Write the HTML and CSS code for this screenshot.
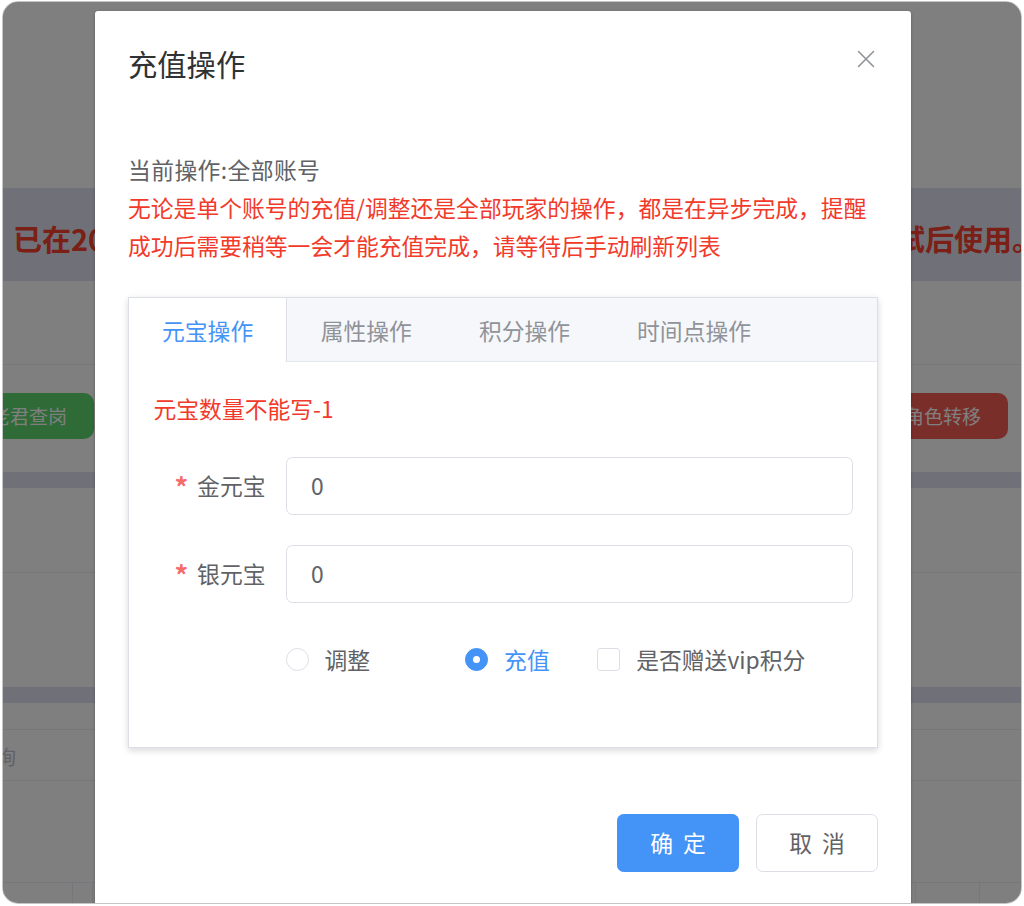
FILE: index.html
```html
<!DOCTYPE html>
<html lang="zh-CN">
<head>
<meta charset="utf-8">
<title>充值操作</title>
<link rel="stylesheet" href="styles.css">
</head>
<body>
<div class="frame">
  <div class="page">
    <div class="page-top"></div>
    <div class="notice">
      <span class="notice-left">已在2020年升级</span>
      <span class="notice-right">请刷新重试后使用。</span>
    </div>
    <div class="page-gap line"></div>
    <div class="action-row">
      <button class="bg-btn bg-btn-green">老君查岗</button>
      <button class="bg-btn bg-btn-red">角色转移</button>
    </div>
    <div class="band"></div>
    <div class="block-a line"></div>
    <div class="block-b"></div>
    <div class="band"></div>
    <div class="block-c line"></div>
    <div class="search-row line"><span class="search-text">查询</span></div>
    <div class="block-d line"></div>
    <div class="table-row">
      <div class="cell c1"></div>
      <div class="cell c2"></div>
      <div class="cell c3"></div>
      <div class="cell c4"></div>
      <div class="cell c5"></div>
    </div>
  </div>

  <div class="mask"></div>

  <div class="dialog">
    <div class="dialog-header">
      <span class="dialog-title">充值操作</span>
      <button class="dialog-close" aria-label="关闭">
        <svg width="26" height="26" viewBox="0 0 26 26"><path d="M5.5 5.5 L20.5 20.5 M20.5 5.5 L5.5 20.5" stroke="#909399" stroke-width="1.6" stroke-linecap="round" fill="none"/></svg>
      </button>
    </div>
    <div class="dialog-body">
      <div class="info">当前操作:全部账号</div>
      <div class="warn">无论是单个账号的充值/调整还是全部玩家的操作，都是在异步完成，提醒成功后需要稍等一会才能充值完成，请等待后手动刷新列表</div>

      <div class="tabs">
        <div class="tabs-header">
          <div class="tab tab-active">元宝操作</div>
          <div class="tab">属性操作</div>
          <div class="tab">积分操作</div>
          <div class="tab">时间点操作</div>
        </div>
        <div class="tab-pane">
          <div class="tip">元宝数量不能写-1</div>
          <div class="form-item">
            <label class="form-label"><span class="req">*</span>金元宝</label>
            <input class="input" type="text" value="0">
          </div>
          <div class="form-item">
            <label class="form-label"><span class="req">*</span>银元宝</label>
            <input class="input" type="text" value="0">
          </div>
          <div class="form-item">
            <div class="options">
              <span class="radio radio-adjust"><span class="radio-circle"></span><span class="radio-label">调整</span></span>
              <span class="radio radio-checked"><span class="radio-circle"></span><span class="radio-label">充值</span></span>
              <span class="checkbox"><span class="checkbox-box"></span><span class="checkbox-label">是否赠送vip积分</span></span>
            </div>
          </div>
        </div>
      </div>
    </div>
    <div class="dialog-footer">
      <button class="btn btn-primary">确 定</button>
      <button class="btn btn-default">取 消</button>
    </div>
  </div>
</div>
</body>
</html>
```

FILE: styles.css
```css
* { box-sizing: border-box; }

html, body {
  margin: 0;
  padding: 0;
  background: #ffffff;
}

body {
  font-family: "Noto Sans CJK SC", "Noto Sans", sans-serif;
}

.frame {
  position: relative;
  width: 1020px;
  height: 903px;
  margin: 1px 2px;
  border: 1px solid #c4c4c4;
  border-radius: 16px;
  overflow: hidden;
  background: #ffffff;
}

/* ---------- background page ---------- */
.page {
  display: flex;
  flex-direction: column;
}

.line { border-bottom: 1px solid #ebeef5; }

.page-top { height: 186px; }

.notice {
  height: 93px;
  background: #e0e2f0;
  display: flex;
  align-items: center;
  justify-content: space-between;
  padding: 6px 0 0 10px;
  font-size: 29px;
  font-weight: 700;
  color: #f4402f;
  white-space: nowrap;
}

.notice-right { margin-right: -20px; }

.page-gap { height: 84px; }

.action-row {
  height: 107px;
  padding: 28px 0 33px;
  display: flex;
  justify-content: space-between;
}

.bg-btn {
  height: 46px;
  padding: 0 27px;
  border: none;
  border-radius: 10px;
  font-family: inherit;
  font-size: 19px;
  line-height: 46px;
  color: #ffffff;
}

.bg-btn-green { background: #5cd66e; margin-left: -39px; }
.bg-btn-red { background: #f45c54; margin-right: 13px; }

.band { height: 16px; background: #e0e2f0; }

.block-a { height: 85px; }
.block-b { height: 114px; }
.block-c { height: 27px; }

.search-row {
  height: 51px;
  display: flex;
  align-items: center;
  padding-top: 3px;
}

.search-text {
  margin-left: -27px;
  font-size: 20px;
  color: #c0c4cc;
}

.block-d { height: 102px; }

.table-row {
  height: 24px;
  display: grid;
  grid-template-columns: 70px 20px 823px 64px 1fr;
}

.cell { border-right: 1px solid #ebeef5; }
.c5 { border-right: none; }

.mask {
  position: absolute;
  inset: 0;
  background: rgba(0, 0, 0, 0.5);
}

/* ---------- dialog ---------- */
.dialog {
  position: absolute;
  left: 92px;
  top: 9px;
  width: 816px;
  background: #ffffff;
  border-radius: 3px;
  box-shadow: 0 1px 3px rgba(0, 0, 0, 0.3);
}

.dialog-header {
  position: relative;
  padding: 33px 33px 16px;
}

.dialog-title {
  display: block;
  font-size: 29.3px;
  line-height: 39px;
  color: #303133;
}

.dialog-close {
  position: absolute;
  top: 35px;
  right: 32px;
  width: 26px;
  height: 26px;
  padding: 0;
  border: none;
  background: transparent;
  display: flex;
}

.dialog-body {
  padding: 52px 33px 49px;
  font-size: 22.8px;
  line-height: 38px;
  color: #606266;
}

.info { letter-spacing: 0.4px; }

.warn { color: #f23a2a; }

.tabs {
  margin-top: 32px;
  border: 1px solid #dcdfe6;
  background: #ffffff;
  box-shadow: 0 3px 6.5px rgba(0, 0, 0, 0.12), 0 0 10px rgba(0, 0, 0, 0.04);
}

.tabs-header {
  display: flex;
  height: 64px;
  background: #f5f7fa;
  box-shadow: inset 0 -1px 0 #e4e7ed;
}

.tab {
  height: 64px;
  padding: 2px 33.5px 0;
  line-height: 62px;
  font-size: 22.8px;
  color: #909399;
  white-space: nowrap;
}

.tab-active {
  padding: 2px 33px 0;
  background: #ffffff;
  border-right: 1px solid #dcdfe6;
  color: #4494f8;
}

.tab-pane {
  padding: 24.5px 24.5px 26px;
}

.tip {
  color: #f23a2a;
  line-height: 38px;
  margin: 3px 0 29px;
}

.form-item {
  display: flex;
  height: 58px;
  margin-bottom: 30px;
}

.form-label {
  width: 132px;
  flex: none;
  padding-right: 20px;
  text-align: right;
  line-height: 58px;
  color: #606266;
}

.req {
  color: #f56c6c;
  font-size: 27px;
  font-weight: 700;
  margin-right: 9px;
  vertical-align: -3px;
}

.input {
  flex: 1;
  height: 58px;
  padding: 0 24.5px;
  border: 1px solid #dcdfe6;
  border-radius: 6.5px;
  font-family: inherit;
  font-size: 22.8px;
  color: #606266;
  background: #ffffff;
  outline: none;
}

.options {
  margin-left: 132px;
  display: flex;
  align-items: center;
  height: 58px;
  margin-top: -2px;
}

.radio, .checkbox {
  display: inline-flex;
  align-items: center;
  white-space: nowrap;
}

.radio-circle {
  width: 23px;
  height: 23px;
  border: 1px solid #dcdfe6;
  border-radius: 50%;
  background: #ffffff;
  display: flex;
  align-items: center;
  justify-content: center;
}

.radio-label, .checkbox-label {
  padding-left: 16px;
  color: #606266;
}

.radio-adjust { margin-right: 95px; }

.radio-checked { margin-right: 47.5px; }
.radio-checked .radio-circle {
  background: #4494f8;
  border-color: #4494f8;
}
.radio-checked .radio-circle::after {
  content: "";
  width: 7px;
  height: 7px;
  border-radius: 50%;
  background: #ffffff;
}
.radio-checked .radio-label { color: #4494f8; }

.checkbox-box {
  width: 23px;
  height: 23px;
  border: 1px solid #dcdfe6;
  border-radius: 3px;
  background: #ffffff;
}

.dialog-footer {
  padding: 17px 33px 33px;
  display: flex;
  justify-content: flex-end;
  gap: 17px;
}

.btn {
  width: 122px;
  height: 58px;
  border-radius: 6.5px;
  font-family: inherit;
  font-size: 22.8px;
  line-height: 56px;
  padding: 0;
  text-align: center;
  word-spacing: 5px;
}

.btn-primary {
  background: #4494f8;
  border: 1px solid #4494f8;
  color: #ffffff;
}

.btn-default {
  background: #ffffff;
  border: 1px solid #dcdfe6;
  color: #606266;
}
```
